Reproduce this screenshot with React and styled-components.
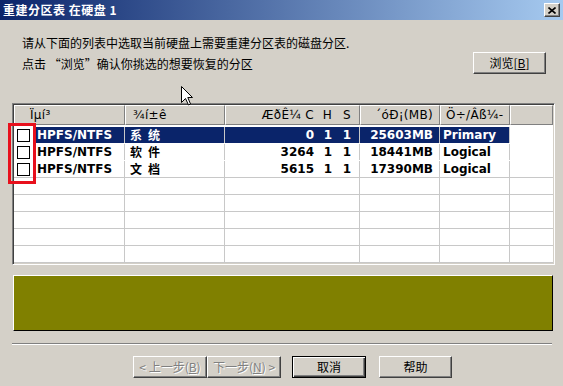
import React from 'react'
import styled, { createGlobalStyle, css } from 'styled-components'

const CJK = `"Noto Sans CJK SC", "DejaVu Sans", sans-serif`
const LATIN = `"DejaVu Sans", "Noto Sans CJK SC", sans-serif`

const GlobalStyle = createGlobalStyle`
  html, body {
    margin: 0;
    padding: 0;
    background: #d4d0c8;
  }
  body {
    font-family: ${LATIN};
  }
`

const Window = styled.div`
  position: relative;
  width: 563px;
  height: 386px;
  background: #d4d0c8;
  display: flex;
  flex-direction: column;
  overflow: hidden;
`

const TitleBar = styled.div`
  height: 20px;
  flex: none;
  display: flex;
  align-items: center;
  justify-content: space-between;
  padding: 0 3px;
  background: linear-gradient(to right, #0a246a, #a6caf0);
`

const Title = styled.span`
  color: #fff;
  font: bold 12px/20px ${CJK};
  letter-spacing: 0.5px;
`

const CloseButton = styled.div`
  width: 16px;
  height: 14px;
  box-sizing: border-box;
  background: #d4d0c8;
  border: 1px solid;
  border-color: #fff #404040 #404040 #fff;
  box-shadow: inset -1px -1px #808080;
  display: flex;
  align-items: center;
  justify-content: center;
`

const Intro = styled.div`
  display: flex;
  justify-content: space-between;
  align-items: flex-start;
  height: 83px;
  box-sizing: border-box;
  padding: 15px 17px 0 22px;
`

const Lines = styled.div`
  display: flex;
  flex-direction: column;
  gap: 5px;
`

const Line = styled.div`
  font: 12px/16px ${CJK};
  color: #000;
`

const Button = styled.button`
  width: ${(p) => p.$w || 74}px;
  height: 22px;
  box-sizing: border-box;
  margin: 0;
  padding: 0;
  background: #d4d0c8;
  font: 12px/18px ${CJK};
  color: ${(p) => (p.disabled ? '#808080' : '#000')};
  text-shadow: ${(p) => (p.disabled ? '1px 1px #fff' : 'none')};
  border: 1px solid;
  border-color: #fff #404040 #404040 #fff;
  box-shadow: inset -1px -1px #808080;
  ${(p) =>
    p.$default &&
    css`
      border-color: #000;
      box-shadow: inset 1px 1px #fff, inset -1px -1px #404040,
        inset -2px -2px #808080;
    `}
`

const List = styled.div`
  margin-left: 12px;
  width: 543px;
  box-sizing: border-box;
  border: 1px solid;
  border-color: #808080 #fff #fff #808080;
  box-shadow: inset 1px 1px #404040, inset -1px -1px #d4d0c8;
  padding: 1px;
  background: #fff;
`

const HeaderRow = styled.div`
  display: flex;
  height: 20px;
  margin-bottom: 2px;
`

const HeaderCell = styled.div`
  width: ${(p) => p.$w}px;
  flex: none;
  box-sizing: border-box;
  background: #d4d0c8;
  border: 1px solid;
  border-color: #fff #808080 #808080 #fff;
  display: flex;
  align-items: center;
  justify-content: ${(p) => (p.$right ? 'flex-end' : 'flex-start')};
  padding: ${(p) => p.$pad || '0'};
  font: 12px/16px ${LATIN};
  letter-spacing: 0.3px;
  color: #000;
  white-space: pre;
`

const Row = styled.div`
  display: flex;
  height: 17px;
  box-sizing: border-box;
  border-bottom: 1px solid ${(p) => (p.$lined ? '#c8c8c8' : 'transparent')};
`

const Cell = styled.div`
  width: ${(p) => p.$w}px;
  flex: none;
  box-sizing: border-box;
  border-right: ${(p) => (p.$last ? 'none' : '1px solid #c8c8c8')};
  background: ${(p) => (p.$sel ? '#0a246a' : 'transparent')};
  color: ${(p) => (p.$sel ? '#fff' : '#000')};
  display: flex;
  align-items: center;
  justify-content: ${(p) => (p.$right ? 'flex-end' : 'flex-start')};
  padding: ${(p) => p.$pad || '0'};
  font: bold 12px/15px ${LATIN};
  white-space: pre;
  overflow: hidden;
`

const CjkText = styled.span`
  font: bold 12px/14px ${CJK};
  letter-spacing: 6px;
`

const Chs = styled.div`
  width: 100%;
  display: grid;
  grid-template-columns: 1fr 18px 19px;
  justify-items: end;
  align-items: center;
`

const Checkbox = styled.span`
  width: 13px;
  height: 13px;
  flex: none;
  box-sizing: border-box;
  border: 1px solid #000;
  background: #fff;
  margin: 0 6px 0 3px;
`

const Label = styled.span`
  flex: 1;
  align-self: stretch;
  display: flex;
  align-items: center;
  padding-left: 1px;
  background: ${(p) => (p.$sel ? '#0a246a' : 'transparent')};
  color: ${(p) => (p.$sel ? '#fff' : '#000')};
`

const StatusPanel = styled.div`
  margin: 10px 0 0 13px;
  width: 540px;
  height: 56px;
  box-sizing: border-box;
  background: #808000;
  border: 1px solid;
  border-color: #fff #000 #000 #fff;
`

const Separator = styled.div`
  margin: 12px 0 0 12px;
  width: 540px;
  border-top: 1px solid #808080;
  border-bottom: 1px solid #fff;
`

const ButtonRow = styled.div`
  display: flex;
  margin-top: 11px;
  padding-left: 133px;
`

const Annotation = styled.div`
  position: absolute;
  left: 8px;
  top: 123px;
  width: 28px;
  height: 61px;
  box-sizing: border-box;
  border: 3px solid #e8101c;
  pointer-events: none;
`

const Cursor = styled.svg`
  position: absolute;
  left: 181px;
  top: 86px;
`

const COLS = [111, 100, 135, 80, 70, 43]

const PARTITIONS = [
  { fs: 'HPFS/NTFS', label: '系统', c: '0', h: '1', s: '1', size: '25603MB', type: 'Primary' },
  { fs: 'HPFS/NTFS', label: '软件', c: '3264', h: '1', s: '1', size: '18441MB', type: 'Logical' },
  { fs: 'HPFS/NTFS', label: '文档', c: '5615', h: '1', s: '1', size: '17390MB', type: 'Logical' },
]

const EMPTY_ROWS = 5

export default function App() {
  return (
    <Window>
      <GlobalStyle />
      <TitleBar>
        <Title>重建分区表 在硬盘 1</Title>
        <CloseButton>
          <svg width="8" height="7" viewBox="0 0 8 7">
            <path d="M0.5 0.5 L7.5 6.5 M7.5 0.5 L0.5 6.5" stroke="#000" strokeWidth="1.6" />
          </svg>
        </CloseButton>
      </TitleBar>

      <Intro>
        <Lines>
          <Line>请从下面的列表中选取当前硬盘上需要重建分区表的磁盘分区.</Line>
          <Line>点击 “浏览”确认你挑选的想要恢复的分区</Line>
        </Lines>
        <Button $w={73} style={{ marginTop: 17 }}>
          浏览[<u>B</u>]
        </Button>
      </Intro>

      <List>
        <HeaderRow>
          <HeaderCell $w={COLS[0]} $pad="0 0 0 15px">Ïµí³</HeaderCell>
          <HeaderCell $w={COLS[1]} $pad="0 0 0 7px">¾í±ê</HeaderCell>
          <HeaderCell $w={COLS[2]} $pad="0 8px 0 0">
            <Chs>
              <span>ÆðÊ¼ C</span>
              <span>H</span>
              <span>S</span>
            </Chs>
          </HeaderCell>
          <HeaderCell $w={COLS[3]} $right $pad="0 6px 0 0">´óÐ¡(MB)</HeaderCell>
          <HeaderCell $w={COLS[4]} $pad="0 0 0 5px">Ö÷/Âß¼-</HeaderCell>
          <HeaderCell $w={COLS[5]} />
        </HeaderRow>

        {PARTITIONS.map((p, i) => {
          const sel = i === 0
          return (
            <Row key={`${p.label}-${i}`} $lined={i === PARTITIONS.length - 1}>
              <Cell $w={COLS[0]}>
                <Checkbox />
                <Label $sel={sel}>{p.fs}</Label>
              </Cell>
              <Cell $w={COLS[1]} $sel={sel} $pad="0 0 0 5px">
                <CjkText>{p.label}</CjkText>
              </Cell>
              <Cell $w={COLS[2]} $sel={sel} $pad="0 8px 0 0">
                <Chs>
                  <span>{p.c}</span>
                  <span>{p.h}</span>
                  <span>{p.s}</span>
                </Chs>
              </Cell>
              <Cell $w={COLS[3]} $sel={sel} $right $pad="0 6px 0 0">
                {p.size}
              </Cell>
              <Cell $w={COLS[4]} $sel={sel} $pad="0 0 0 3px">
                {p.type}
              </Cell>
              <Cell $w={COLS[5]} $last />
            </Row>
          )
        })}

        {Array.from({ length: EMPTY_ROWS }).map((_, i) => (
          <Row key={`empty-${i}`} $lined>
            {COLS.map((w, j) => (
              <Cell key={j} $w={w} $last={j === COLS.length - 1} />
            ))}
          </Row>
        ))}
      </List>

      <StatusPanel />
      <Separator />

      <ButtonRow>
        <Button disabled>
          &lt; 上一步(<u>B</u>)
        </Button>
        <Button disabled>
          下一步(<u>N</u>) &gt;
        </Button>
        <Button $default style={{ marginLeft: 11 }}>
          取消
        </Button>
        <Button $w={73} style={{ marginLeft: 13 }}>
          帮助
        </Button>
      </ButtonRow>

      <Annotation />
      <Cursor width="13" height="20" viewBox="0 0 13 20">
        <path
          d="M0.5 0.5 L0.5 16.5 L4.5 12.5 L7.5 19 L9.5 18 L6.8 11.5 L11.5 11.5 Z"
          fill="#fff"
          stroke="#000"
          strokeWidth="1"
        />
      </Cursor>
    </Window>
  )
}
